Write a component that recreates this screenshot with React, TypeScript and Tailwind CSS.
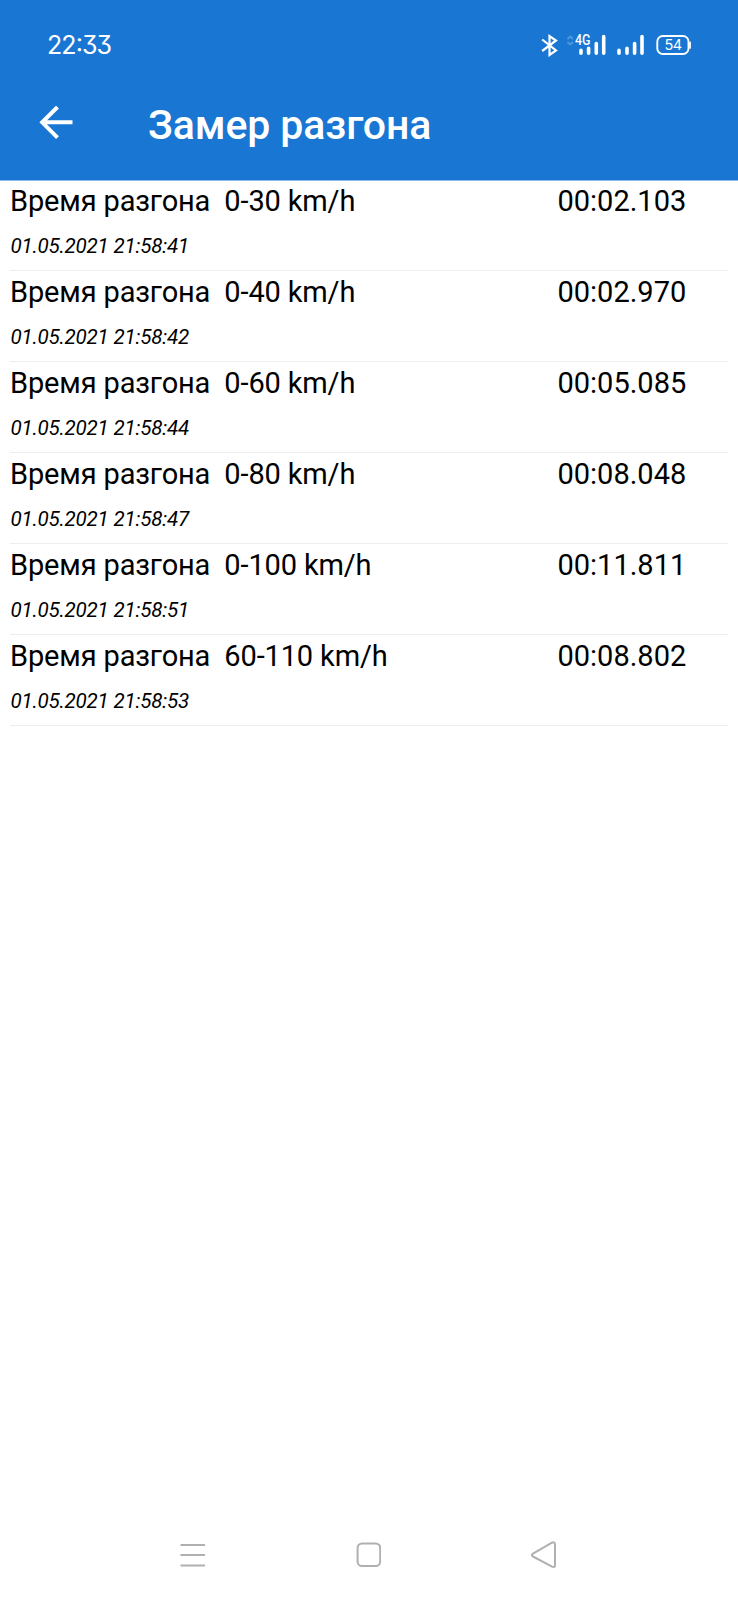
const results = [
  { range: "0-30", time: "00:02.103", date: "01.05.2021 21:58:41" },
  { range: "0-40", time: "00:02.970", date: "01.05.2021 21:58:42" },
  { range: "0-60", time: "00:05.085", date: "01.05.2021 21:58:44" },
  { range: "0-80", time: "00:08.048", date: "01.05.2021 21:58:47" },
  { range: "0-100", time: "00:11.811", date: "01.05.2021 21:58:51" },
  { range: "60-110", time: "00:08.802", date: "01.05.2021 21:58:53" },
];

function StatusIcons() {
  return (
    <svg width="154" height="24" viewBox="540 33 154 24" fill="none" stroke="white">
      <path d="M542.2 39.5 556 50.5 549.5 55V36L556 40.5 542.2 51" strokeWidth="2.2" />
      <path d="M567.5 39 570.2 36.5 573 39M567.5 42 570.2 44.5 573 42" strokeWidth="1.8" opacity="0.25" />
      <text x="575" y="45.3" fontSize="14" fontWeight="500" fill="white" stroke="none" textLength="15.5" lengthAdjust="spacingAndGlyphs" className="font-['Roboto',sans-serif]">4G</text>
      <path d="M581 50.3v3M588.6 48.3v5M596.3 43.5v9.8M603.7 36.5v16.8" strokeWidth="3.6" strokeLinecap="round" />
      <path d="M619 50.3v3M627 48.3v5M634.6 43.5v9.8M642 36.5v16.8" strokeWidth="3.6" strokeLinecap="round" />
      <rect x="657.3" y="36" width="31.2" height="18" rx="5.5" strokeWidth="1.9" />
      <path d="M690 42.3v5.6" strokeWidth="1.8" strokeLinecap="round" />
      <text x="664.5" y="50.3" fontSize="14.5" fill="white" stroke="none" textLength="17.5" className="font-['Inter',sans-serif]">54</text>
    </svg>
  );
}

export default function App() {
  return (
    <div className="flex h-[1600px] w-[738px] flex-col bg-white font-['Roboto',sans-serif] text-black">
      <header className="h-[181px] shrink-0 border-b border-[#8dbbe8] bg-[#1976d2] text-white">
        <div className="flex h-[90px] items-center justify-between pr-[44px] pl-[47px]">
          <span className="pt-[2px] font-['Inter',sans-serif] text-[25px] font-normal tracking-[-0.9px] [font-feature-settings:'cv09','case']">22:33</span>
          <StatusIcons />
        </div>
        <div className="flex h-[70px] items-center pl-[38px]">
          <svg width="38" height="38" viewBox="0 0 38 38" fill="none" stroke="white" strokeWidth="4">
            <path d="M34.5 16.3H4.2M19.5 1 4.2 16.3 19.5 31.6" />
          </svg>
          <h1 className="mt-[2px] ml-[72px] text-[41px] font-medium tracking-[-0.1px]">Замер разгона</h1>
        </div>
      </header>
      <main className="-mt-px flex-1 px-[10px]">
        {results.map(({ range, time, date }) => (
          <div key={range} className="flex h-[91px] justify-between border-b border-[#eeeeee]">
            <div>
              <div className="text-[29px] leading-[43px] tracking-[-0.14px] whitespace-pre">Время разгона  {range} km/h</div>
              <div className="pl-[0.5px] text-[20.6px] leading-[46px] tracking-[-0.22px] italic">{date}</div>
            </div>
            <div className="w-[170.5px] text-[29px] leading-[43px]">{time}</div>
          </div>
        ))}
      </main>
      <nav className="flex h-[90px] shrink-0 items-center justify-between px-[180px] text-[#b0b0b0]">
        <svg width="26" height="28" viewBox="0 0 26 28" stroke="currentColor" strokeWidth="2">
          <path d="M.5 4h24.5M.5 14h24.5M.5 24.4h24.5" />
        </svg>
        <svg width="26" height="26" viewBox="0 0 26 26" fill="none" stroke="currentColor" strokeWidth="2">
          <rect x="2.6" y="1.4" width="22.6" height="22.6" rx="4.5" />
        </svg>
        <svg width="28" height="28" viewBox="0 0 28 28" fill="none" stroke="currentColor" strokeWidth="2" strokeLinejoin="round">
          <path d="M3 12.6 22 1.7Q25 .5 25 3.4V24.2Q25 27 22 25.7L3 15.5Q.7 14 3 12.6Z" />
        </svg>
      </nav>
    </div>
  );
}
